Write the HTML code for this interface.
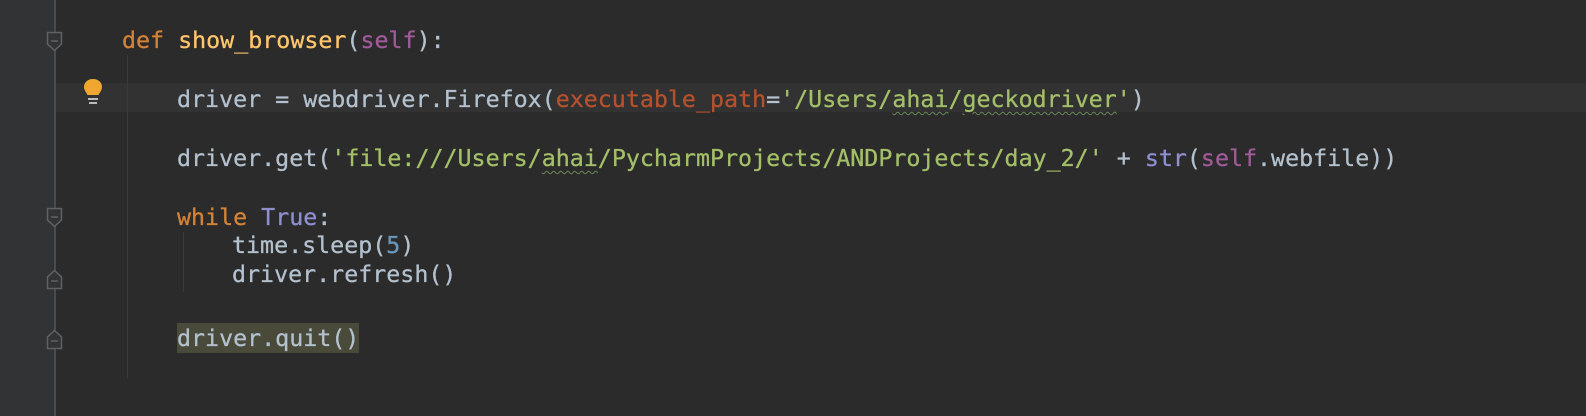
<!DOCTYPE html>
<html><head><style>
body{margin:0;width:1586px;height:416px;background:#2b2b2b;overflow:hidden;position:relative;font-family:"DejaVu Sans Mono","Liberation Mono",monospace;font-size:23.3px;}
.g{position:absolute;left:0;top:0;width:55px;height:416px;background:#313335;}
.gl{position:absolute;left:54px;top:0;width:2px;height:416px;background:#4b4b4b;}
.cur{position:absolute;left:56px;top:83px;width:1530px;height:29px;background:#323232;}
.l{position:absolute;white-space:pre;color:#b3c0cd;line-height:29px;height:29px;-webkit-text-stroke:0.3px currentColor;}
.k{color:#d48336}.f{color:#ffc66d}.s{color:#a05a98}.st{color:#a3bf68}.p{color:#b5512d}.n{color:#6897bb}.b{color:#8f8fd0}
.w{text-decoration:underline wavy #6a8759;text-underline-offset:4px;text-decoration-thickness:1px}
.ig{position:absolute;width:1px;background:#3b3b3b;}
.fold{position:absolute;left:46px;}
.hl{background:#4a4a3a;}
</style></head><body>
<div class="g"></div><div class="gl"></div>
<div class="cur"></div>
<div class="ig" style="left:127px;top:55px;height:323px"></div>
<div class="ig" style="left:183px;top:232px;height:60px"></div>
<svg class="fold" style="top:31px" width="18" height="22"><path d="M1.5 1.5H15.5V13L8.5 19.5L1.5 13Z" fill="#313335" stroke="#5f6163" stroke-width="1.5"/><path d="M5 10H12" stroke="#5f6163" stroke-width="1.5"/></svg>
<svg class="fold" style="top:207px" width="18" height="22"><path d="M1.5 1.5H15.5V13L8.5 19.5L1.5 13Z" fill="#313335" stroke="#5f6163" stroke-width="1.5"/><path d="M5 10H12" stroke="#5f6163" stroke-width="1.5"/></svg>
<svg class="fold" style="top:268px" width="18" height="22"><path d="M1.5 20.5H15.5V9L8.5 2.5L1.5 9Z" fill="#313335" stroke="#5f6163" stroke-width="1.5"/><path d="M5 13H12" stroke="#5f6163" stroke-width="1.5"/></svg>
<svg class="fold" style="top:328px" width="18" height="22"><path d="M1.5 20.5H15.5V9L8.5 2.5L1.5 9Z" fill="#313335" stroke="#5f6163" stroke-width="1.5"/><path d="M5 13H12" stroke="#5f6163" stroke-width="1.5"/></svg>
<svg style="position:absolute;left:82px;top:78px" width="22" height="30"><path d="M11 1C5.5 1 2 4.5 2 9c0 3.5 2.5 5.5 3.5 8h11c1-2.5 3.5-4.5 3.5-8 0-4.5-3.5-8-9-8z" fill="#f0a732"/><rect x="6" y="20" width="10" height="2" fill="#bbb"/><rect x="7" y="24" width="8" height="2" fill="#bbb"/></svg>
<div class="l" style="left:122px;top:26px"><span class="k">def</span> <span class="f">show_browser</span>(<span class="s">self</span>):</div>
<div class="l" style="left:177px;top:85px">driver = webdriver.Firefox(<span class="p">executable_path</span>=<span class="st">'/Users/<span class="w">ahai</span>/<span class="w">geckodriver</span>'</span>)</div>
<div class="l" style="left:177px;top:144px">driver.get(<span class="st">'file:///Users/<span class="w">ahai</span>/PycharmProjects/ANDProjects/day_2/'</span> + <span class="b">str</span>(<span class="s">self</span>.webfile))</div>
<div class="l" style="left:177px;top:203px"><span class="k">while</span> <span class="b">True</span>:</div>
<div class="l" style="left:232px;top:231px">time.sleep(<span class="n">5</span>)</div>
<div class="l" style="left:232px;top:260px">driver.refresh()</div>
<div class="l hl" style="left:177px;top:323px;height:30px;line-height:31px">driver.quit()</div>
</body></html>
